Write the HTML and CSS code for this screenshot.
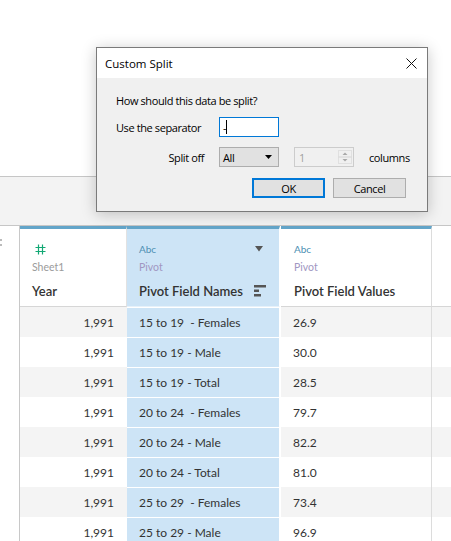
FILE: index.html
```html
<!DOCTYPE html>
<html>
<head>
<meta charset="utf-8">
<link rel="stylesheet" href="styles.css">
</head>
<body>
<div class="page">
  <div class="top-area"></div>
  <div class="toolbar"></div>
  <div class="grid">
    <div class="row header">
      <div class="gutter"><span class="grip"></span></div>
      <div class="cell c1">
        <svg class="num-icon" width="11" height="11" viewBox="0 0 11 11"><path d="M3.5 0.5V10.5M7.5 0.5V10.5M0.5 3.5H10.5M0.5 7.5H10.5" stroke="#12a874" stroke-width="1.2" fill="none"/></svg>
        <div class="src">Sheet1</div>
        <div class="fname">Year</div>
      </div>
      <div class="cell c2">
        <div class="type-line"><span class="abc">Abc</span>
          <svg class="drop" width="8" height="6" viewBox="0 0 8 6"><path d="M0 0H8L4 5.5Z" fill="#555"/></svg>
        </div>
        <div class="src pivot">Pivot</div>
        <div class="fname-line"><span class="fname">Pivot Field Names</span>
          <svg class="sort" width="12" height="12" viewBox="0 0 12 12"><rect x="0" y="0" width="12" height="2.5" fill="#555"/><rect x="0" y="4.5" width="5" height="2.5" fill="#555"/><rect x="0" y="9" width="7" height="2.5" fill="#555"/></svg>
        </div>
      </div>
      <div class="cell c3">
        <div class="type-line"><span class="abc">Abc</span></div>
        <div class="src pivot">Pivot</div>
        <div class="fname">Pivot Field Values</div>
      </div>
      <div class="rest"></div>
    </div>

    <div class="row odd"><div class="gutter"></div><div class="cell c1">1,991</div><div class="cell c2">15 to 19  - Females</div><div class="cell c3">26.9</div><div class="rest"></div></div>
    <div class="row"><div class="gutter"></div><div class="cell c1">1,991</div><div class="cell c2">15 to 19 - Male</div><div class="cell c3">30.0</div><div class="rest"></div></div>
    <div class="row odd"><div class="gutter"></div><div class="cell c1">1,991</div><div class="cell c2">15 to 19 - Total</div><div class="cell c3">28.5</div><div class="rest"></div></div>
    <div class="row"><div class="gutter"></div><div class="cell c1">1,991</div><div class="cell c2">20 to 24  - Females</div><div class="cell c3">79.7</div><div class="rest"></div></div>
    <div class="row odd"><div class="gutter"></div><div class="cell c1">1,991</div><div class="cell c2">20 to 24 - Male</div><div class="cell c3">82.2</div><div class="rest"></div></div>
    <div class="row"><div class="gutter"></div><div class="cell c1">1,991</div><div class="cell c2">20 to 24 - Total</div><div class="cell c3">81.0</div><div class="rest"></div></div>
    <div class="row odd"><div class="gutter"></div><div class="cell c1">1,991</div><div class="cell c2">25 to 29  - Females</div><div class="cell c3">73.4</div><div class="rest"></div></div>
    <div class="row"><div class="gutter"></div><div class="cell c1">1,991</div><div class="cell c2">25 to 29 - Male</div><div class="cell c3">96.9</div><div class="rest"></div></div>
  </div>

  <div class="dialog">
    <div class="titlebar">
      <span class="title">Custom Split</span>
      <svg class="close" width="11" height="11" viewBox="0 0 11 11"><path d="M0.5 0.5L10.5 10.5M10.5 0.5L0.5 10.5" stroke="#111" stroke-width="1" fill="none"/></svg>
    </div>
    <div class="dbody">
      <div class="question">How should this data be split?</div>
      <div class="form-row">
        <span class="label">Use the separator</span>
        <div class="textbox"><span class="val">-</span><span class="caret"></span></div>
      </div>
      <div class="form-row">
        <span class="label right">Split off</span>
        <div class="select"><span>All</span>
          <svg width="7" height="4" viewBox="0 0 7 4"><path d="M0 0H7L3.5 4Z" fill="#000"/></svg>
        </div>
        <div class="spin"><span class="num">1</span>
          <div class="spin-btns">
            <svg width="14" height="14" viewBox="0 0 14 14"><rect x="0.5" y="0.5" width="13" height="13" fill="none" stroke="#e0e0e0"/><path d="M0.5 7H13.5" stroke="#d4d4d4" stroke-width="1"/><path d="M4.5 5H9.5L7 2.5Z" fill="#a8a8a8"/><path d="M4.5 9H9.5L7 11.5Z" fill="#a8a8a8"/></svg>
          </div>
        </div>
        <span class="cols">columns</span>
      </div>
      <div class="buttons">
        <div class="btn ok">OK</div>
        <div class="btn">Cancel</div>
      </div>
    </div>
  </div>
</div>
</body>
</html>
```

FILE: styles.css
```css
html, body {
  margin: 0;
  padding: 0;
  background: #fff;
}
.page {
  position: relative;
  width: 451px;
  height: 541px;
  overflow: hidden;
  font-family: "Lato", "Noto Sans", sans-serif;
}
.top-area {
  background: #fff;
  border-bottom: 1px solid #c6c6c6;
  box-sizing: border-box;
  height: 177px;
}
.toolbar {
  height: 48px;
  background: #f3f3f3;
  border-bottom: 1px solid #c6c6c6;
}
.grid {
  display: flex;
  flex-direction: column;
}
.row {
  display: grid;
  grid-template-columns: 20px 107px 154px 151px 1fr;
  height: 30px;
  font-size: 12px;
  color: #333;
}
.row.odd .c1, .row.odd .c3, .row.odd .rest {
  background: #f4f4f4;
}
.gutter {
  border-right: 1px solid #c8c8c8;
  background: #fff;
  position: relative;
}
.cell {
  box-sizing: border-box;
  display: flex;
  align-items: center;
}
.c1 {
  justify-content: flex-end;
  padding-right: 13px;
}
.c2 {
  background: #cde4f6;
  border-right: 2px solid #fff;
  border-top: 1px solid #fff;
  padding-left: 12px;
  white-space: pre;
}
.c3 {
  padding-left: 12px;
  border-right: 1px solid #dcdcdc;
}
.row.header {
  height: 81px;
}
.header .cell {
  flex-direction: column;
  align-items: flex-start;
  justify-content: flex-start;
  border-top: 3px solid #63a5c9;
  border-bottom: 1px solid #d6d6d6;
  padding-top: 14px;
  padding-left: 12px;
  padding-right: 0;
}
.header .c2 {
  border-right: 1px solid #fff;
  margin-right: 1px;
  border-bottom-color: #e6f1fa;
}
.header .c3 {
  padding-left: 13px;
  border-right: 1px solid #dcdcdc;
}
.header .c1 {
  border-right: 1px solid #e2e2e2;
}
.header .rest {
  border-bottom: 1px solid #d6d6d6;
}
.grip {
  position: absolute;
  left: 0;
  top: 13px;
  width: 2px;
  height: 8px;
  background: linear-gradient(#bbb 0 2px, transparent 2px 5px, #bbb 5px 7px, transparent 7px);
}
.num-icon {
  margin-left: 3px;
  margin-top: 1px;
  height: 11px;
}
.type-line {
  display: flex;
  align-items: center;
  width: 100%;
  height: 12px;
}
.abc {
  font-size: 10px;
  color: #4d8fb3;
}
.drop {
  margin-left: auto;
  margin-right: 16px;
}
.src {
  font-size: 10.5px;
  color: #9b9b9b;
  margin-top: 5px;
  line-height: 14px;
}
.src.pivot {
  color: #a197c2;
}
.fname {
  font-size: 13px;
  color: #333;
  font-weight: 600;
  margin-top: 9px;
  line-height: 16px;
}
.fname-line {
  display: flex;
  align-items: center;
  margin-top: 9px;
}
.fname-line .fname {
  margin-top: 0;
}
.sort {
  margin-left: 11px;
}

/* dialog */
.dialog {
  position: absolute;
  left: 96px;
  top: 47px;
  width: 332px;
  height: 165px;
  box-sizing: border-box;
  border: 1px solid #7a7a7a;
  background: #f0f0f0;
  box-shadow: 0 2px 14px rgba(0, 0, 0, 0.22);
  font-family: "Open Sans", "Noto Sans", sans-serif;
  font-size: 11px;
  letter-spacing: -0.4px;
  color: #000;
}
.titlebar {
  height: 30px;
  background: #fff;
  display: flex;
  align-items: center;
  padding-left: 8px;
  padding-right: 10px;
}
.title {
  font-size: 11.5px;
  letter-spacing: 0;
}
.close {
  margin-left: auto;
}
.dbody {
  padding: 15px 21px 0 19px;
}
.question {
  line-height: 16px;
}
.form-row {
  display: flex;
  align-items: center;
  height: 20px;
  margin-top: 8px;
}
.form-row + .form-row {
  margin-top: 10px;
}
.form-row > * {
  flex-shrink: 0;
}
.label {
  width: 88px;
  margin-right: 15px;
  white-space: nowrap;
}
.label.right {
  text-align: right;
}
.textbox {
  width: 60px;
  height: 20px;
  box-sizing: border-box;
  border: 1px solid #0078d7;
  background: #fff;
  display: flex;
  align-items: center;
  padding-left: 3px;
}
.caret {
  width: 1px;
  height: 14px;
  background: #000;
}
.select {
  width: 60px;
  height: 20px;
  box-sizing: border-box;
  border: 1px solid #adadad;
  background: #e1e1e1;
  display: flex;
  align-items: center;
  justify-content: space-between;
  padding: 0 6px 0 3px;
}
.spin {
  width: 60px;
  height: 20px;
  box-sizing: border-box;
  border: 1px solid #cccccc;
  background: #f0f0f0;
  margin-left: 15px;
  display: flex;
  align-items: center;
  justify-content: space-between;
  padding: 0 1px 0 4px;
  color: #a0a0a0;
}
.spin-btns {
  display: flex;
}
.cols {
  margin-left: 15px;
}
.buttons {
  display: flex;
  justify-content: flex-end;
  gap: 8px;
  margin-top: 11px;
}
.btn {
  width: 73px;
  height: 20px;
  box-sizing: border-box;
  border: 1px solid #adadad;
  background: #e1e1e1;
  display: flex;
  align-items: center;
  justify-content: center;
}
.btn.ok {
  border: 2px solid #0078d7;
}
```
